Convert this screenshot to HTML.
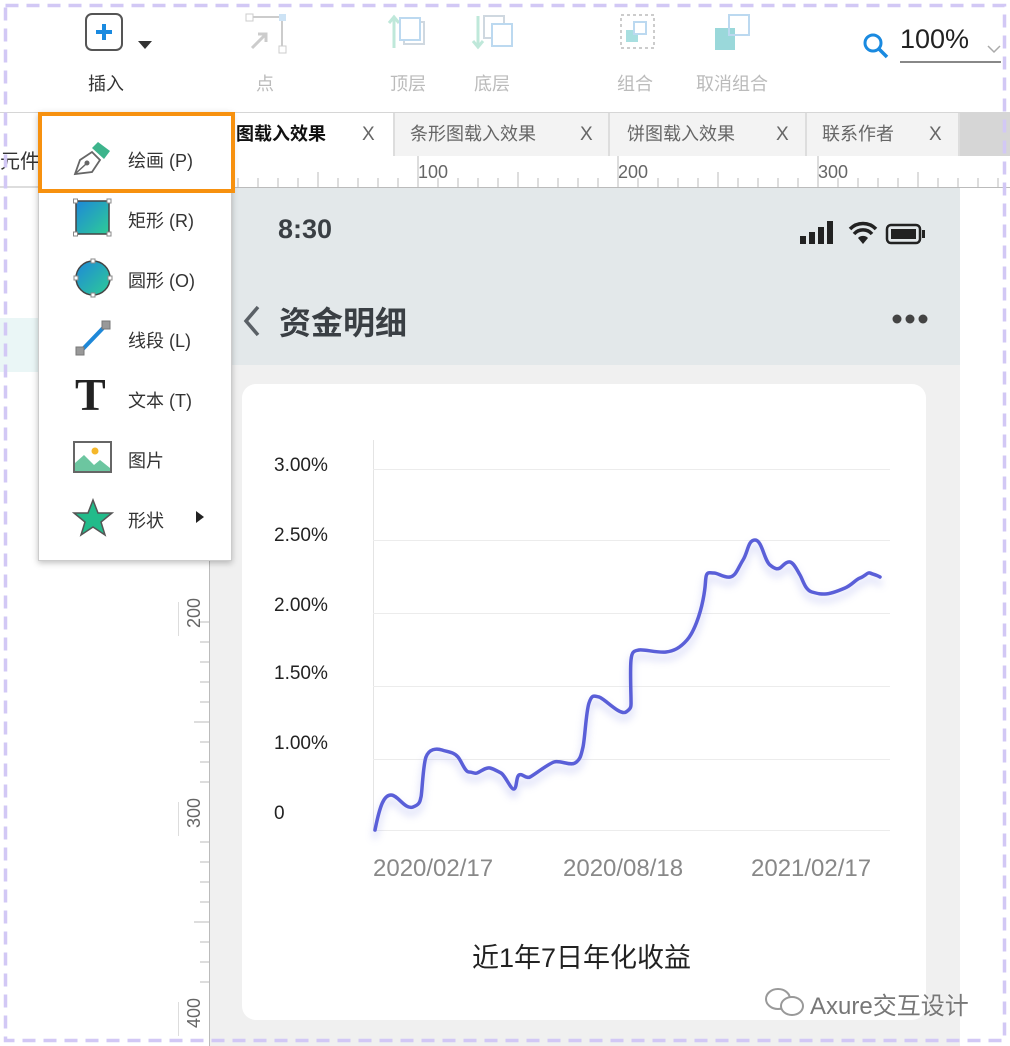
<!DOCTYPE html>
<html><head><meta charset="utf-8">
<style>
*{margin:0;padding:0;box-sizing:border-box}
body{width:1010px;height:1046px;overflow:hidden;background:#fff;position:relative;font-family:"Liberation Sans","Noto Sans CJK SC",sans-serif;color:#333}
.a{position:absolute}
.lbl{position:absolute;top:70px;font-size:18px;color:#bbb;white-space:nowrap}
.tab{position:absolute;top:113px;height:43px;background:#f3f3f3;border-right:2px solid #ddd;font-size:18px;color:#666;line-height:43px}
.tab .x{position:absolute;top:0;font-size:19px;color:#666}
.mi{position:absolute;left:128px;font-size:18px;color:#333;white-space:nowrap}
.yl{position:absolute;left:274px;font-size:19px;color:#222}
.gl{position:absolute;left:373px;width:517px;height:1px;background:#ececec}
.dl{position:absolute;top:855px;font-size:24px;color:#888}
</style></head><body>

<!-- toolbar -->
<div class="a" style="left:85px;top:13px;width:38px;height:38px;border:2px solid #555;border-radius:7px"></div>
<div class="a" style="left:96px;top:30px;width:16px;height:4px;background:#1a8ae0"></div>
<div class="a" style="left:102px;top:24px;width:4px;height:16px;background:#1a8ae0"></div>
<div class="a" style="left:138px;top:41px;width:0;height:0;border-left:7px solid transparent;border-right:7px solid transparent;border-top:8px solid #333"></div>
<div class="lbl" style="left:88px;color:#333">插入</div>
<svg class="a" style="left:244px;top:12px" width="46" height="44"><path d="M6 5H38V38" stroke="#ccc" stroke-width="2" fill="none"/><rect x="2" y="2" width="7" height="7" fill="#fff" stroke="#ccc"/><rect x="35" y="2" width="7" height="7" fill="#cde3f5"/><rect x="35" y="34" width="7" height="7" fill="#fff" stroke="#ccc"/><path d="M8 36L22 22M14 22h8v8" stroke="#ccc" stroke-width="3" fill="none"/></svg>
<div class="lbl" style="left:256px">点</div>
<svg class="a" style="left:386px;top:12px" width="50" height="40"><path d="M8 36V6M3 11l5-6 5 6" stroke="#bfe8da" stroke-width="3" fill="none"/><rect x="18" y="10" width="20" height="22" fill="none" stroke="#cfd8e0" stroke-width="2"/><rect x="14" y="6" width="20" height="22" fill="#fff" stroke="#bcd9f0" stroke-width="2"/></svg>
<div class="lbl" style="left:390px">顶层</div>
<svg class="a" style="left:470px;top:12px" width="50" height="40"><path d="M8 4V34M3 29l5 6 5-6" stroke="#bfe8da" stroke-width="3" fill="none"/><rect x="14" y="4" width="20" height="22" fill="none" stroke="#cfd8e0" stroke-width="2"/><rect x="22" y="12" width="20" height="22" fill="#fff" stroke="#bcd9f0" stroke-width="2"/></svg>
<div class="lbl" style="left:474px">底层</div>
<svg class="a" style="left:618px;top:12px" width="40" height="40"><rect x="3" y="3" width="33" height="33" fill="none" stroke="#ccc" stroke-dasharray="3 3" stroke-width="2"/><rect x="8" y="18" width="12" height="12" fill="#a8dfe0"/><rect x="16" y="10" width="12" height="12" fill="#fff" stroke="#bcd9f0" stroke-width="2"/></svg>
<div class="lbl" style="left:617px">组合</div>
<svg class="a" style="left:712px;top:12px" width="44" height="44"><rect x="3" y="16" width="20" height="22" fill="#9ad8da"/><rect x="17" y="3" width="20" height="20" fill="none" stroke="#bcd9f0" stroke-width="2"/></svg>
<div class="lbl" style="left:696px">取消组合</div>
<svg class="a" style="left:862px;top:32px" width="28" height="28"><circle cx="11" cy="11" r="8" stroke="#1a8ae0" stroke-width="3" fill="none"/><path d="M17 17l8 8" stroke="#1a8ae0" stroke-width="3.5"/></svg>
<div class="a" style="left:900px;top:24px;font-size:27px;color:#222">100%</div>
<div class="a" style="left:900px;top:61px;width:101px;height:2px;background:#888"></div>
<svg class="a" style="left:986px;top:44px" width="16" height="12"><path d="M2 2l6 6 6-6" stroke="#aaa" stroke-width="1.5" fill="none"/></svg>

<!-- tab bar -->
<div class="a" style="left:0;top:112px;width:1010px;height:44px;background:#d6d6d6"></div>
<div class="a" style="left:0;top:113px;width:230px;height:43px;background:#fff"></div>
<div class="tab" style="left:230px;width:165px;background:#fff;color:#111;font-weight:bold"><span style="margin-left:6px">图载入效果</span><span class="x" style="left:132px;font-weight:normal">X</span></div>
<div class="tab" style="left:395px;width:215px"><span style="margin-left:15px">条形图载入效果</span><span class="x" style="left:185px">X</span></div>
<div class="tab" style="left:610px;width:197px"><span style="margin-left:17px">饼图载入效果</span><span class="x" style="left:166px">X</span></div>
<div class="tab" style="left:807px;width:153px"><span style="margin-left:15px">联系作者</span><span class="x" style="left:122px">X</span></div>
<div class="a" style="left:0;top:145px;font-size:20px;color:#333">元件</div>
<div class="a" style="left:0;top:186px;width:178px;height:2px;background:#ddd"></div>
<div class="a" style="left:0;top:318px;width:178px;height:54px;background:#eaf6f6"></div>

<!-- horizontal ruler -->
<svg class="a" style="left:178px;top:156px" width="832" height="32">
<rect width="832" height="32" fill="#fff"/>
<g stroke="#bbb" stroke-width="1">
<path d="M0 31.5H832"/>
<path d="M40 0V32M240 0V32M440 0V32M640 0V32"/>
<path d="M60 22V32M80 22V32M100 22V32M120 22V32M140 16V32M160 22V32M180 22V32M200 22V32M220 22V32M260 22V32M280 22V32M300 22V32M320 22V32M340 16V32M360 22V32M380 22V32M400 22V32M420 22V32M460 22V32M480 22V32M500 22V32M520 22V32M540 16V32M560 22V32M580 22V32M600 22V32M620 22V32M660 22V32M680 22V32M700 22V32M720 22V32M740 16V32M760 22V32M780 22V32M800 22V32M820 22V32M20 22V32"/>
</g>
<text x="240" y="22" font-size="18" fill="#666" font-family="Liberation Sans">100</text>
<text x="440" y="22" font-size="18" fill="#666" font-family="Liberation Sans">200</text>
<text x="640" y="22" font-size="18" fill="#666" font-family="Liberation Sans">300</text>
</svg>

<!-- vertical ruler -->
<svg class="a" style="left:178px;top:188px" width="32" height="858">
<rect width="32" height="858" fill="#fff"/>
<g stroke="#bbb"><path d="M31.5 0V858"/>
<path d="M0 414V448M0 614V648M0 814V848"/>
<path d="M22 434H32M22 454H32M22 474H32M22 494H32M22 514H32M22 534H32M22 554H32M22 574H32M22 594H32M22 654H32M22 674H32M22 694H32M22 714H32M22 734H32M22 754H32M22 774H32M22 794H32M16 534H32M16 734H32"/></g>
<text transform="translate(22,440) rotate(-90)" font-size="18" fill="#666" font-family="Liberation Sans">200</text>
<text transform="translate(22,640) rotate(-90)" font-size="18" fill="#666" font-family="Liberation Sans">300</text>
<text transform="translate(22,840) rotate(-90)" font-size="18" fill="#666" font-family="Liberation Sans">400</text>
</svg>

<!-- canvas -->
<div class="a" style="left:210px;top:188px;width:750px;height:858px;background:#f0f0f0"></div>
<div class="a" style="left:210px;top:188px;width:750px;height:177px;background:#e3e8ea"></div>
<div class="a" style="left:278px;top:214px;font-size:27px;font-weight:bold;color:#3a3f44">8:30</div>
<svg class="a" style="left:798px;top:218px" width="132" height="30">
<rect x="2" y="18" width="6" height="8" fill="#222"/><rect x="11" y="14" width="6" height="12" fill="#222"/><rect x="20" y="9" width="6" height="17" fill="#222"/><rect x="29" y="3" width="6" height="23" fill="#222"/>
<path d="M52 11a18 18 0 0 1 26 0M56 16a12 12 0 0 1 18 0" stroke="#222" stroke-width="3.5" fill="none"/><path d="M60 20l5 6 5-6a7 7 0 0 0-10 0z" fill="#222"/>
<rect x="89" y="7" width="33" height="18" rx="4" stroke="#222" stroke-width="2.5" fill="none"/><rect x="93" y="11" width="25" height="10" fill="#222"/><rect x="124" y="12" width="3" height="8" fill="#222"/>
</svg>
<svg class="a" style="left:240px;top:304px" width="24" height="34"><path d="M18 3L6 17l12 14" stroke="#5a6066" stroke-width="3.5" fill="none"/></svg>
<div class="a" style="left:279px;top:298px;font-size:32px;font-weight:bold;color:#3a3f44">资金明细</div>
<svg class="a" style="left:890px;top:312px" width="42" height="14"><circle cx="7" cy="7" r="4.5" fill="#444"/><circle cx="20" cy="7" r="4.5" fill="#444"/><circle cx="33" cy="7" r="4.5" fill="#444"/></svg>

<div class="a" style="left:242px;top:384px;width:684px;height:636px;background:#fff;border-radius:14px"></div>
<div class="a" style="left:373px;top:440px;width:1px;height:390px;background:#e4e4e4"></div>
<div class="gl" style="top:469px"></div><div class="gl" style="top:540px"></div><div class="gl" style="top:613px"></div><div class="gl" style="top:686px"></div><div class="gl" style="top:759px"></div><div class="gl" style="top:830px"></div>
<div class="yl" style="top:455px">3.00%</div><div class="yl" style="top:525px">2.50%</div><div class="yl" style="top:595px">2.00%</div><div class="yl" style="top:663px">1.50%</div><div class="yl" style="top:733px">1.00%</div><div class="yl" style="top:803px">0</div>
<svg class="a" style="left:0;top:0" width="1010" height="1046">
<defs><filter id="f" x="-10%" y="-10%" width="120%" height="130%"><feGaussianBlur stdDeviation="4"/></filter></defs>
<g fill="none" stroke-linecap="round" stroke-linejoin="round">
<path d="M375 830C380 805 384 795 391 795S405 810 413 807S420 800 421 797S423 765 426 757S436 748 442 750S454 752 458 757S465 772 469 772S474 774 477 773S486 767 490 768S497 771 501 773S511 790 514 789S516 777 519 775S526 779 530 777S548 764 554 762S570 766 575 763S581 756 583 747S586 712 589 703S594 696 599 697S620 716 626 712S631 706 631 700S630 670 631 660S635 651 639 650S658 653 666 652S680 648 687 640S700 615 703 600S705 583 706 577S710 573 714 573S724 578 730 577S738 568 743 560S748 540 755 540S764 560 770 565S778 569 780 568S786 561 790 562S797 570 800 575S805 590 812 592S820 594 825 594S838 591 845 588S855 580 860 578S868 572 870 573S877 575 880 577" stroke="#8088e6" stroke-width="6" opacity="0.25" filter="url(#f)" transform="translate(0,6)"/>
<path d="M375 830C380 805 384 795 391 795S405 810 413 807S420 800 421 797S423 765 426 757S436 748 442 750S454 752 458 757S465 772 469 772S474 774 477 773S486 767 490 768S497 771 501 773S511 790 514 789S516 777 519 775S526 779 530 777S548 764 554 762S570 766 575 763S581 756 583 747S586 712 589 703S594 696 599 697S620 716 626 712S631 706 631 700S630 670 631 660S635 651 639 650S658 653 666 652S680 648 687 640S700 615 703 600S705 583 706 577S710 573 714 573S724 578 730 577S738 568 743 560S748 540 755 540S764 560 770 565S778 569 780 568S786 561 790 562S797 570 800 575S805 590 812 592S820 594 825 594S838 591 845 588S855 580 860 578S868 572 870 573S877 575 880 577" stroke="#5a5fd8" stroke-width="3.5"/>
</g></svg>
<div class="dl" style="left:373px">2020/02/17</div>
<div class="dl" style="left:563px">2020/08/18</div>
<div class="dl" style="left:751px">2021/02/17</div>
<div class="a" style="left:472px;top:936px;font-size:27px;color:#222">近1年7日年化收益</div>
<svg class="a" style="left:762px;top:986px" width="46" height="32"><ellipse cx="16" cy="13" rx="12" ry="10" fill="#fff" stroke="#999" stroke-width="2"/><ellipse cx="30" cy="20" rx="11" ry="9" fill="#fff" stroke="#999" stroke-width="2"/></svg>
<div class="a" style="left:810px;top:986px;font-size:24px;color:#777;text-shadow:0 0 2px #fff">Axure交互设计</div>

<!-- insert dropdown menu -->
<div class="a" style="left:38px;top:112px;width:194px;height:449px;background:#fff;border:1px solid #ccc;box-shadow:0 2px 6px rgba(0,0,0,.25)"></div>
<div class="a" style="left:38px;top:112px;width:197px;height:81px;border:4px solid #f7910f;background:#fff"></div>
<svg class="a" style="left:70px;top:138px" width="44" height="40"><path d="M5 36L10 22L22 14L30 22L22 34Z" fill="#fff" stroke="#666" stroke-width="1.8"/><circle cx="17" cy="25" r="2.5" fill="#666"/><path d="M5 36L16 26" stroke="#666" stroke-width="1.5"/><path d="M22 10L28 4L40 13L34 21Z" fill="#3db48c"/></svg>
<div class="mi" style="top:147px">绘画 (P)</div>
<svg class="a" style="left:72px;top:198px" width="42" height="40"><defs><linearGradient id="g1" x1="0" y1="0" x2="1" y2="1"><stop offset="0" stop-color="#1e88d8"/><stop offset="1" stop-color="#2ecc96"/></linearGradient></defs><rect x="4" y="3" width="33" height="33" fill="url(#g1)" stroke="#444" stroke-width="1.5"/><g fill="#fff" stroke="#888"><rect x="1.5" y="1" width="4" height="4"/><rect x="35" y="1" width="4" height="4"/><rect x="1.5" y="34" width="4" height="4"/><rect x="35" y="34" width="4" height="4"/></g></svg>
<div class="mi" style="top:207px">矩形 (R)</div>
<svg class="a" style="left:72px;top:258px" width="42" height="40"><circle cx="21" cy="20" r="17" fill="url(#g1)" stroke="#444" stroke-width="1.5"/><g fill="#fff" stroke="#888"><rect x="19" y="1" width="4" height="4"/><rect x="2" y="18" width="4" height="4"/><rect x="36" y="18" width="4" height="4"/><rect x="19" y="35" width="4" height="4"/></g></svg>
<div class="mi" style="top:267px">圆形 (O)</div>
<svg class="a" style="left:72px;top:318px" width="42" height="40"><path d="M9 33L33 8" stroke="#1e88d8" stroke-width="4"/><rect x="4" y="29" width="8" height="8" fill="#999" stroke="#777"/><rect x="30" y="3" width="8" height="8" fill="#999" stroke="#777"/></svg>
<div class="mi" style="top:327px">线段 (L)</div>
<div class="a" style="left:75px;top:372px;font-family:'Liberation Serif',serif;font-size:46px;font-weight:bold;color:#222;line-height:46px">T</div>
<div class="mi" style="top:387px">文本 (T)</div>
<svg class="a" style="left:72px;top:440px" width="42" height="36"><rect x="2" y="2" width="37" height="30" fill="#fff" stroke="#666" stroke-width="2"/><path d="M3 31V23L12 15L22 25L28 20L38 28V31Z" fill="#6cc6a0"/><circle cx="23" cy="11" r="3.5" fill="#f5b72a"/></svg>
<div class="mi" style="top:447px">图片</div>
<svg class="a" style="left:72px;top:498px" width="42" height="40"><path d="M21 2L26 15L40 15L29 24L33 37L21 29L9 37L13 24L2 15L16 15Z" fill="#22bb8a" stroke="#555" stroke-width="1.5"/></svg>
<div class="mi" style="top:507px">形状</div>
<div class="a" style="left:196px;top:511px;width:0;height:0;border-top:6px solid transparent;border-bottom:6px solid transparent;border-left:8px solid #222"></div>

<!-- dashed border -->
<svg class="a" style="left:0;top:0;pointer-events:none" width="1010" height="1046"><rect x="5.5" y="5.5" width="999" height="1035" fill="none" stroke="#d2c8f5" stroke-width="3.5" stroke-dasharray="13 8"/></svg>
</body></html>
